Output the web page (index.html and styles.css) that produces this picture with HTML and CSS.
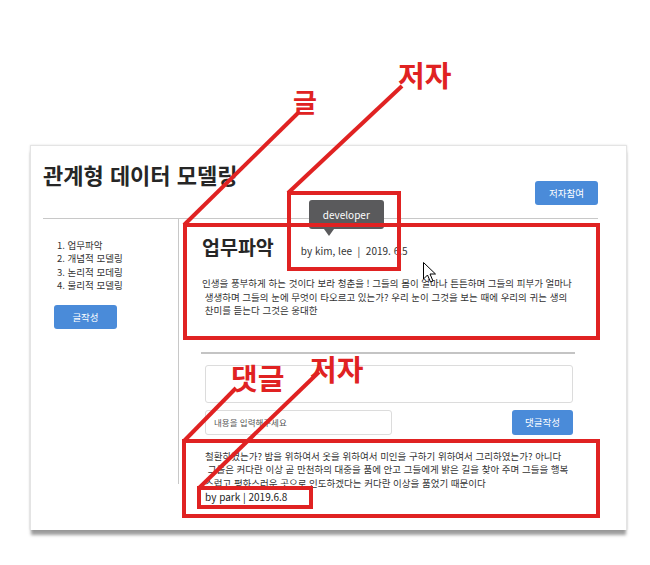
FILE: index.html
```html
<!DOCTYPE html>
<html lang="ko">
<head>
<meta charset="utf-8">
<title>관계형 데이터 모델링</title>
<link rel="stylesheet" href="styles.css">
</head>
<body>
<div class="page">
  <div class="card">
    <header class="head">
      <h1 class="title">관계형 데이터 모델링</h1>
      <button class="btn btn-join">저자참여</button>
    </header>
    <div class="body">
      <aside class="side">
        <ol class="toc">
          <li>업무파악</li>
          <li>개념적 모델링</li>
          <li>논리적 모데링</li>
          <li>물리적 모델링</li>
        </ol>
        <button class="btn btn-write">글작성</button>
      </aside>
      <main class="main">
        <article class="post">
          <div class="post-head">
            <h2 class="post-title">업무파악</h2>
            <span class="meta">by kim, lee &nbsp;| &nbsp;2019. 6.5<span class="tip">developer</span></span>
          </div>
          <p class="post-text">인생을 풍부하게 하는 것이다 보라 청춘을 ! 그들의 몸이 얼마나 튼튼하며 그들의 피부가 얼마나<br>&nbsp;생생하며 그들의 눈에 무엇이 타오르고 있는가? 우리 눈이 그것을 보는 때에 우리의 귀는 생의<br>&nbsp;찬미를 듣는다 그것은 웅대한</p>
        </article>
        <hr class="divider">
        <section class="comments">
          <textarea class="comment-area"></textarea>
          <div class="comment-form">
            <input class="comment-input" type="text" placeholder="내용을 입력해주세요">
            <button class="btn btn-comment">댓글작성</button>
          </div>
          <div class="comment">
            <p class="comment-text">철환하였는가? 밤을 위하여서 옷을 위하여서 미인을 구하기 위하여서 그리하였는가? 아니다<br>&nbsp;그들은 커다란 이상 곧 만천하의 대중을 품에 안고 그들에게 밝은 길을 찾아 주며 그들을 행복<br>스럽고 평화스러운 곳으로 인도하겠다는 커다란 이상을 품었기 때문이다</p>
            <p class="comment-meta">by park | 2019.6.8</p>
          </div>
        </section>
      </main>
    </div>
  </div>

  <svg class="annot" width="650" height="565" viewBox="0 0 650 565">
    <g class="marks" fill="none" stroke="#e02222" stroke-width="4">
      <line x1="298" y1="113" x2="184" y2="225"/>
      <line x1="402" y1="86" x2="288" y2="193"/>
      <line x1="236" y1="388" x2="184" y2="441"/>
      <line x1="319" y1="372" x2="199" y2="488"/>
      <rect x="185" y="225" width="413" height="113"/>
      <rect x="289" y="193" width="110" height="76"/>
      <rect x="184" y="441" width="414" height="75"/>
      <rect x="199" y="488" width="112" height="19"/>
    </g>
    <text class="note" x="398" y="87">저자</text>
    <text class="note note-sm" x="293" y="112">글</text>
    <text class="note" x="231" y="390">댓글</text>
    <text class="note" x="310" y="381">저자</text>
    <path class="cursor" d="M423.5 262.5 L423.5 279 L427.5 275 L430.5 282 L433 281 L430 274 L435.5 274 Z"/>
  </svg>
</div>
</body>
</html>
```

FILE: styles.css
```css
* { box-sizing: border-box; }

html, body {
  margin: 0;
  padding: 0;
  background: #ffffff;
}

body {
  font-family: "Noto Sans CJK KR", "Noto Sans", sans-serif;
  color: #333333;
}

.page {
  position: relative;
  width: 650px;
  height: 565px;
  overflow: hidden;
  padding: 145px 0 0 30px;
}

.card {
  width: 597px;
  height: 385px;
  background: #ffffff;
  border: 1px solid #e4e4e4;
  border-bottom: none;
  padding: 0 28px 0 12px;
  box-shadow: 0 6px 3px -1px rgba(0, 0, 0, 0.38), 0 0 2px rgba(0, 0, 0, 0.12);
}

.head {
  display: flex;
  justify-content: space-between;
  align-items: flex-start;
  padding: 13px 0 13px 0;
  border-bottom: 1px solid #c8c8c8;
}

.title {
  margin: 0;
  font-size: 22px;
  line-height: 31px;
  font-weight: 700;
  color: #262626;
}

.btn {
  font-family: inherit;
  border: none;
  border-radius: 3px;
  background: #4a8bd9;
  color: #ffffff;
  font-size: 9.5px;
  padding: 0;
  height: 24px;
  width: 63px;
}

.btn-join {
  margin-top: 22px;
}

.body {
  display: flex;
}

.side {
  width: 136px;
  height: 265px;
  border-right: 1px solid #c8c8c8;
  flex: none;
}

.toc {
  margin: 20px 0 0 0;
  padding-left: 14px;
  list-style-position: inside;
  font-size: 9.5px;
  line-height: 13.4px;
  color: #333333;
}

.btn-write {
  margin: 12px 0 0 11px;
}

.main {
  flex: 1;
  padding-top: 15px;
}

.post {
  padding-left: 23px;
}

.post-head {
  display: flex;
  align-items: baseline;
}

.post-title {
  margin: 0;
  font-size: 19.5px;
  line-height: 26px;
  font-weight: 700;
  color: #262626;
}

.meta {
  position: relative;
  margin-left: 27px;
  font-size: 10px;
  color: #333333;
}

.tip {
  position: absolute;
  left: 8px;
  top: -43px;
  width: 75px;
  height: 29px;
  border-radius: 3px;
  background: #5a5a5c;
  color: #ffffff;
  font-size: 10px;
  line-height: 29px;
  text-align: center;
}

.tip::after {
  content: "";
  position: absolute;
  left: 15px;
  top: 29px;
  border-left: 5px solid transparent;
  border-right: 5px solid transparent;
  border-top: 7px solid #5a5a5c;
}

.post-text {
  margin: 17px 0 0 0;
  font-size: 9.5px;
  line-height: 13.5px;
  white-space: nowrap;
  color: #333333;
}

.divider {
  margin: 34px 23px 0 22px;
  border: none;
  border-top: 2px solid #c4c4c4;
  height: 0;
}

.comments {
  padding: 11px 25px 0 26px;
}

.comment-area {
  display: block;
  width: 100%;
  height: 38px;
  border: 1px solid #dcdcdc;
  border-radius: 3px;
  resize: none;
  margin: 0;
}

.comment-form {
  display: flex;
  justify-content: space-between;
  margin-top: 7px;
}

.comment-input {
  width: 187px;
  height: 25px;
  border: 1px solid #dcdcdc;
  border-radius: 3px;
  padding: 0 8px;
  font-family: inherit;
  font-size: 8.5px;
}

.comment-input::placeholder {
  color: #555555;
}

.btn-comment {
  width: 61px;
  height: 25px;
}

.comment {
  margin-top: 15px;
}

.comment-text {
  margin: 0;
  font-size: 9.5px;
  line-height: 13.5px;
  white-space: nowrap;
  color: #333333;
}

.comment-meta {
  margin: 0;
  font-size: 10px;
  line-height: 14px;
  color: #222222;
}

.annot {
  position: absolute;
  left: 0;
  top: 0;
  pointer-events: none;
}

.note {
  font-family: "Noto Sans CJK KR", sans-serif;
  font-weight: 700;
  font-size: 29px;
  fill: #e02222;
}

.note-sm {
  font-size: 26px;
}

.cursor {
  fill: #ffffff;
  stroke: #000000;
  stroke-width: 1;
  stroke-linejoin: miter;
}
```
